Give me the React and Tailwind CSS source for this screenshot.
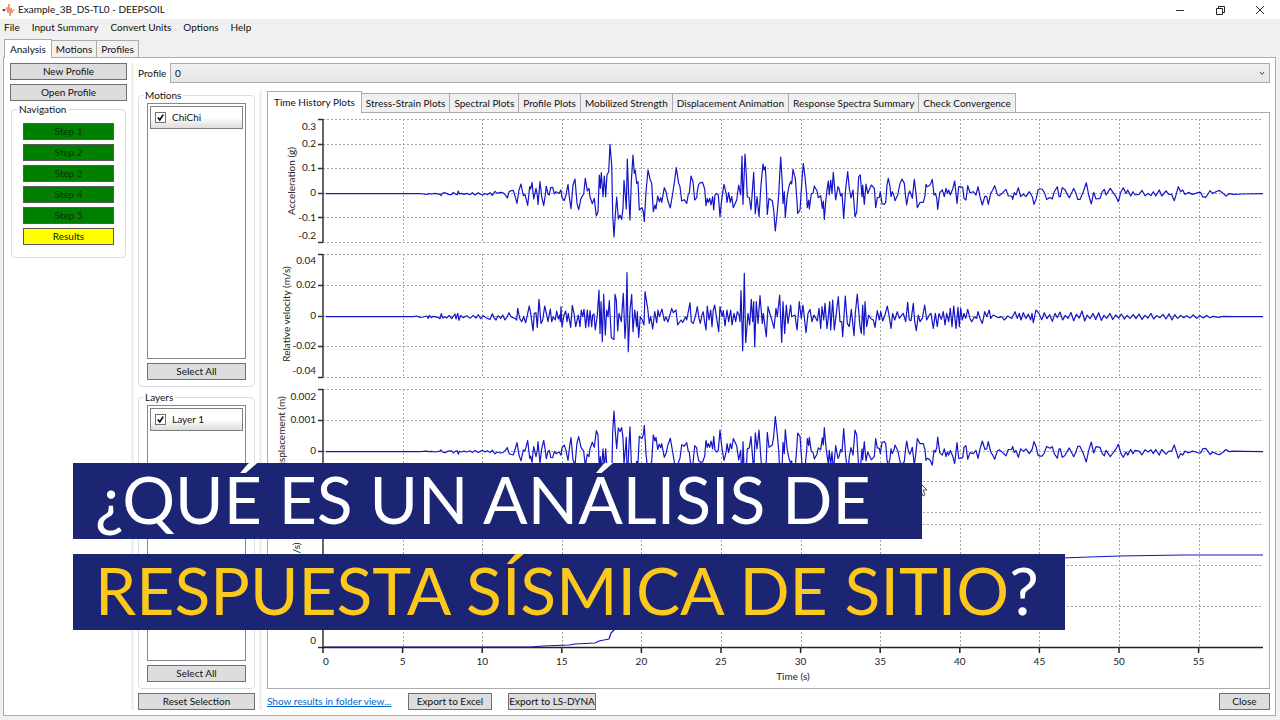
import React from "react";

// Each run of samples has its own x offset and zero level, in thirds of a chart unit.
const trace = (runs) =>
  runs.flatMap(({ start, zero, samples }) =>
    samples
      .trim()
      .split(/\s+/)
      .map((pair) => {
        const [x, y] = pair.split(",").map(Number);
        return [(x + start) / 3, (y - zero) / 3];
      })
  );

const ACCELERATION = trace([
  {
    start: -189,
    zero: 401,
    samples: `197,401 480,401 490,402 500,403 505,401 515,402 525,400 540,403 543,407 547,400 555,398 565,403 575,404 580,397 585,402 592,404 595,393 598,402 605,400 612,403 620,400 630,404 637,398 645,405 655,398 660,402 668,405 675,400 682,404 690,398 697,406 705,394 712,400 720,397 728,398 735,403 742,414 748,394`,
  },
  {
    start: 231,
    zero: 236,
    samples: `334,227 340,226 345,243 351,265 357,225 363,207 370,242 375,238 383,271 389,215 392,222 396,202 401,252 408,220 412,240 414,268 420,200 425,245 431,272 436,240 439,214 444,237 448,240 452,218 458,217 463,237 468,230 477,235 483,225 486,248 493,257 498,240 504,208 509,255 513,281 519,210 525,192 531,265 536,284 543,250 551,237 556,190 562,228 567,220 570,245 577,266 583,250 589,303 594,290 598,180 601,220 604,173 609,245 613,183 617,245 621,180 626,170 630,88 635,150 638,300 642,366 646,300 650,246 655,312 660,300 665,313 669,280 672,196 676,240 679,282 682,132 686,240 690,315 694,200 699,120 703,175 706,165 710,205 714,200 718,285 726,278 730,290 733,320 738,230 744,165 750,192 755,205 760,290 765,270 768,282 773,243 778,260 782,248 785,262 793,218 798,230 803,255 811,279 818,235 824,195 829,158 836,205 840,215 845,258 853,254 860,265 865,238 868,235 873,183 879,200 884,255 890,248`,
  },
  {
    start: 1071,
    zero: 236,
    samples: `52,230 56,208 62,202 68,203 74,222 78,272 82,250 85,262 89,250 93,270 98,245 101,285 105,240 110,235 115,240 120,305 124,265 127,240 132,208 139,238 141,262 146,233 151,262 155,245 160,278 170,255 176,210 182,240 186,123 189,268 195,117 199,180 202,245 208,248 213,284 221,172 226,296 231,245 237,305 243,210 249,147 252,165 256,155 259,210 262,298 267,250 277,257 281,285 286,348 292,290 296,240 299,180 302,126 307,205 309,266 313,230 316,307 322,240 328,210 332,200 335,207 339,163 346,190 350,245 353,295 360,285 366,195 370,146 375,185 380,240 382,278 386,255 388,282 394,236 399,235 403,213 411,228 415,248 422,242 427,280 430,258 433,313 437,260 441,225 445,198 448,240 452,195 456,235 460,172 467,255 474,215 477,220 482,243 486,235 491,310 497,220 503,170 508,220 513,249 519,225 525,305 530,290 536,185 541,180 546,245 548,210 553,268 558,207 563,235 574,210 583,220 587,278 592,248 598,247 601,230 606,266 613,268 617,262 621,210 625,190 630,215 633,245 637,230 642,242 645,257 653,240 660,205 666,192 673,205 677,248 680,270 685,240 689,228 694,240 697,250 703,193 708,235 712,278 720,262 730,262 735,242 738,208 742,215 746,213 751,208 757,193 762,240 766,235 770,248 773,283 779,233 787,225 793,245 798,220 802,235 806,225 811,240 818,222 824,198 831,265 836,215`,
  },
  {
    start: 1911,
    zero: 581,
    samples: `0,560 8,562 12,595 18,600 23,557 30,578 40,575 48,585 54,560 60,590 67,615 75,588 80,590 85,613 92,580 98,570 104,557 112,583 118,587 128,578 138,568 145,588 155,588 158,598 163,578 168,585 175,563 182,590 190,582 198,590 208,575 217,590 222,613 229,595 234,570 240,567 246,567 253,577 260,598 270,592 277,597 283,575 292,560 297,590 301,590 307,563 314,568 322,583 328,593 341,565 348,580 353,598 360,598 370,575 379,548 386,585 394,612 401,577 408,597 420,595 427,575 433,568 438,585 451,565 459,577 468,590 475,605 483,575 490,563 498,580 503,570 512,588 519,575 525,585 537,583 546,571 555,587 565,580 573,587 580,575 587,588 598,570 605,588 618,573 627,583 635,583 643,602 650,578 655,560 662,575 668,570 675,583 685,577 697,583 707,580 716,577 722,577 728,590 737,592 744,582 750,572 758,580 768,575 778,571 790,580 798,588 808,581 820,583 850,582 909,581`,
  },
]);

const VELOCITY = trace([
  {
    start: -189,
    zero: 200,
    samples: `197,200 460,200 470,198 480,202 490,201 500,198 505,205 508,196 514,203 518,199 535,202 540,206 544,191 548,204 555,200 560,204 568,196 575,206 585,192 588,207 593,190 597,211 602,196 610,203 620,197 630,205 640,196 648,204 655,194 662,206 670,197 678,203 690,208 697,191 703,204 708,210 714,197 722,205 728,195 735,210 740,202 747,188 753,200 765,205 770,210 773,175 779,205 785,215 791,200 797,218 803,190 808,168 812,190 819,242 823,190 828,188 832,232 837,148 843,220 848,210 854,168 860,195 864,215 871,177 875,215 880,200 886,210 890,183 895,207 899,195 901,215 903,170 906,230 912,195 917,183 921,215 925,190 932,232 937,166 942,190 947,230 955,195 960,230 964,180 968,200 972,178 977,233 982,180 986,230 990,182 995,230 998,195 1002,192 1006,240 1012,195 1017,120 1020,250 1023,155 1027,275 1031,133 1036,255 1040,180 1044,200 1048,152 1054,262 1062,268 1065,133 1069,150 1073,243 1077,190 1084,215 1090,130 1095,265 1098,215 1101,68 1105,305 1110,180 1115,133 1119,245 1124,180 1130,230 1132,185 1136,262 1141,200 1147,210 1152,225 1155,125 1163,175 1168,220 1172,200 1178,237 1184,185 1190,218 1194,180 1198,200`,
  },
  {
    start: 951,
    zero: 200,
    samples: `66,177 73,213 78,200 84,216 95,175 100,188 108,180 113,225 123,210 128,217 137,200 140,210 145,185 150,158 154,215 160,220 167,195 172,170 177,205 181,220 186,195 190,185 193,210 198,240 202,168 207,210 212,180 216,230 220,180 224,165 230,205 236,245 240,170 246,200 250,182 255,228 261,180 266,215 272,180 276,225 282,190 287,215 292,185 297,195 300,215 303,122 308,302 313,70 317,278 324,190 329,225 334,148 338,215 341,155 344,290 349,155 354,220 360,137 367,220 370,190 379,260 384,170 391,195 397,215 402,235 408,175 412,200 419,135 425,277 429,155 434,250 439,165 444,220 452,165 455,200 465,195 471,240 478,155 484,205 489,165 498,248 504,190 510,178 516,215 522,195 532,213 537,175 542,235 546,170 551,210 555,160 561,235 564,210 569,155 572,240 578,150 583,240 587,205 595,140 600,215 605,215 608,260 616,138 622,220 628,230 634,178 642,257 646,190 652,132 660,230 664,250 668,165 672,255 675,155 680,230 686,195 692,205 700,210 705,232 712,182 718,210 722,185 728,213 735,195 742,168 747,195 753,235 758,190 764,210 772,185 778,205 790,190 797,215 803,157 808,210 813,212 820,160 824,215 829,242 835,195 840,215 847,205 854,165 860,210 868,195 873,190 880,235 886,190 892,230 897,190 904,208 910,185 915,225 920,190 926,215 931,175 936,230 941,168 948,235 954,172 958,230 962,175 967,210 972,190 977,205 983,178 990,205 995,215 1003,200 1010,205 1014,185 1020,205 1027,220 1034,185 1040,200 1048,180 1052,205 1060,195 1075,203 1085,200 1093,210 1103,198 1115,205 1125,185 1132,205 1138,190 1143,210 1150,188 1158,205 1165,192 1172,210 1176,190 1180,218 1188,180 1197,190 1205,209 1213,188 1221,206 1229,194 1237,214 1245,190 1252,203 1260,186 1268,210 1276,196 1284,205 1293,187 1301,212 1309,193 1318,204 1326,183 1334,213 1342,195 1350,206 1359,190 1367,208 1376,188 1384,211 1392,196 1400,205 1410,190 1418,208 1427,195 1436,204 1444,192 1453,207 1462,196 1470,205 1480,194 1488,206 1497,192 1506,208 1515,196 1524,204 1533,190 1541,207 1550,197 1560,203 1569,193 1578,207 1587,191 1596,210 1604,194 1613,205 1622,196 1631,203 1640,197 1650,204 1660,195 1670,205 1680,197 1690,204 1700,196 1710,203 1720,199 1735,202 1750,199 1780,200 1869,200`,
  },
]);

const DISPLACEMENT = ACCELERATION.map(([x, y]) => [x, y * -0.94]);

const INTENSITY = [
  [0, 0], [208, 0], [220, -1], [246, -2], [252, -3], [272, -4], [276, -6], [286, -8],
  [288, -14], [292, -18], [302, -26], [320, -34], [400, -44], [428, -60], [460, -68],
  [520, -76], [640, -85], [738, -89], [796, -91], [860, -92], [940, -92],
];

const LEFT = 55;
const RIGHT = 995;
const STEP = 79.6;

const PLOTS = [
  {
    title: "Acceleration (g)", titleX: 27, titleY: 68, top: 6, rows: 5, pitch: 24.6, zero: 80.7, data: ACCELERATION,
    labels: [["0.3", 14], ["0.2", 31], ["0.1", 55], ["0", 80], ["-0.1", 105], ["-0.2", 123]],
  },
  {
    title: "Relative velocity (m/s)", titleX: 22, titleY: 201, top: 141, rows: 4, pitch: 30.75, zero: 203.7, data: VELOCITY,
    labels: [["0.04", 148], ["0.02", 172], ["0", 203], ["-0.02", 233], ["-0.04", 258]],
  },
  {
    title: "Relative displacement (m)", titleX: 17, titleY: 339, top: 276, rows: 4, pitch: 30.75, zero: 338.7, data: DISPLACEMENT,
    labels: [["0.002", 284], ["0.001", 307], ["0", 338]],
  },
  {
    title: "Arias Intensity (m/s)", titleX: 32, titleY: 473, top: 411, rows: 3, pitch: 41, zero: 534, data: INTENSITY,
    labels: [["0", 528]],
  },
];

function Plot({ plot }) {
  const { title, titleX, titleY, top, rows, pitch, zero, data, labels } = plot;
  const bottom = top + rows * pitch;
  const lines = Array.from({ length: rows + 1 }, (_, i) => Math.round(top + i * pitch) + 0.5);
  return (
    <g>
      <g stroke="#a3a3a3" strokeDasharray="2 2">
        {lines.map((y) => (
          <line key={y} x1={LEFT} x2={RIGHT} y1={y} y2={y} />
        ))}
        {Array.from({ length: 11 }, (_, i) => Math.round(LEFT + (i + 1) * STEP) + 0.5).map((x) => (
          <line key={x} x1={x} x2={x} y1={top} y2={bottom} />
        ))}
      </g>
      <g stroke="#333" strokeWidth="1.5">
        <line x1={LEFT} x2={LEFT} y1={top} y2={bottom} />
        {lines.map((y) => (
          <line key={y} x1={LEFT - 5} x2={LEFT} y1={y} y2={y} />
        ))}
      </g>
      <polyline
        points={data.map(([x, y]) => `${(LEFT + x).toFixed(1)},${(zero + y).toFixed(1)}`).join(" ")}
        fill="none"
        stroke="#1414c8"
        strokeWidth="1.2"
        strokeLinejoin="round"
      />
      {labels.map(([text, y]) => (
        <text key={text} x={LEFT - 7} y={y + 3} textAnchor="end">
          {text}
        </text>
      ))}
      <text transform={`translate(${titleX} ${titleY}) rotate(-90)`} textAnchor="middle">
        {title}
      </text>
    </g>
  );
}

function TimeHistoryChart() {
  return (
    <svg viewBox="0 0 1001 575" className="block w-full text-[10px]" fill="#222" role="img" aria-label="Time history plots">
      {PLOTS.map((plot) => (
        <Plot key={plot.title} plot={plot} />
      ))}
      <line x1={LEFT} x2={RIGHT} y1="534.5" y2="534.5" stroke="#222" strokeWidth="1.5" />
      {Array.from({ length: 12 }, (_, i) => (
        <g key={i}>
          <line x1={LEFT + i * STEP} x2={LEFT + i * STEP} y1="534" y2="540" stroke="#222" strokeWidth="1.5" />
          <text x={LEFT + i * STEP + (i ? 0 : 3)} y="552" textAnchor="middle">
            {i * 5}
          </text>
        </g>
      ))}
      <text x="525" y="567" textAnchor="middle">
        Time (s)
      </text>
    </svg>
  );
}

function Button({ children, className = "" }) {
  return (
    <button type="button" className={`h-[17px] shrink-0 border border-[#707070] bg-[#dddddd] leading-[15px] whitespace-nowrap ${className}`}>
      {children}
    </button>
  );
}

function ListGroup({ title, item }) {
  return (
    <fieldset className="flex min-w-0 flex-1 flex-col rounded-sm border border-[#d5dfe5] px-2 pb-1.5">
      <legend className="-ml-1 px-0.5 leading-4">{title}</legend>
      <div className="flex-1 border border-[#828790] p-0.5">
        <label className="flex h-[23px] items-center gap-1.5 border border-[#808080] bg-linear-to-b from-white from-50% to-[#dcdcdc] px-1">
          <input
            type="checkbox"
            defaultChecked
            className="peer sr-only"
          />
          <span className="flex size-[11px] items-center justify-center border border-[#707070] bg-white text-transparent peer-checked:text-black">
            <svg viewBox="0 0 10 10" className="size-[9px]" fill="none" stroke="currentColor" strokeWidth="1.8">
              <path d="M2 5 4.2 7.6 8 1.8" />
            </svg>
          </span>
          {item}
        </label>
      </div>
      <Button className="mt-1">Select All</Button>
    </fieldset>
  );
}

const PLOT_TABS = [
  "Time History Plots", "Stress-Strain Plots", "Spectral Plots", "Profile Plots",
  "Mobilized Strength", "Displacement Animation", "Response Spectra Summary", "Check Convergence",
];

export default function App() {
  return (
    <div className="relative flex min-h-screen flex-col bg-[#f0f0f0] font-['Lato','Noto_Sans',sans-serif] text-[10px] text-[#111]">
      <header className="flex h-[19px] items-center bg-white pl-0.5">
        <svg viewBox="0 0 14 14" className="size-3.5" fill="none">
          <path d="M3 7h1l1-3 1 6 1-9 1 12 1-8 1 5 1-3h2" stroke="#e8875c" strokeWidth="1" />
          <circle cx="1.8" cy="7" r="1.3" fill="#554a4a" />
        </svg>
        <h1 className="flex-1 pl-0.5">Example_3B_DS-TL0 - DEEPSOIL</h1>
        <div className="flex">
          <button type="button" aria-label="Minimize" className="flex h-[19px] w-10 items-center justify-center">
            <svg viewBox="0 0 10 10" className="size-2.5" stroke="#333"><path d="M1 5.5h8" /></svg>
          </button>
          <button type="button" aria-label="Restore" className="flex h-[19px] w-10 items-center justify-center">
            <svg viewBox="0 0 10 10" className="size-2.5" fill="none" stroke="#222">
              <path d="M1.500 3.500h6v6h-6zM3.500 3.500v-2h6v6h-2" />
            </svg>
          </button>
          <button type="button" aria-label="Close window" className="flex h-[19px] w-10 items-center justify-center">
            <svg viewBox="0 0 10 10" className="size-2.5" stroke="#222"><path d="M1 1l8 8M9 1L1 9" /></svg>
          </button>
        </div>
      </header>

      <nav className="flex h-[19px] items-center gap-3 pb-0.5 pl-1">
        {["File", "Input Summary", "Convert Units", "Options", "Help"].map((name) => (
          <button key={name} type="button">{name}</button>
        ))}
      </nav>

      <div className="flex h-[19px] items-end pl-1" role="tablist">
        <button type="button" role="tab" aria-selected="true" className="relative z-10 -mb-px h-[19px] border border-b-0 border-[#acacac] bg-white px-[5px]">Analysis</button>
        <button type="button" role="tab" aria-selected="false" className="h-[17px] border border-b-0 border-l-0 border-[#acacac] px-1">Motions</button>
        <button type="button" role="tab" aria-selected="false" className="h-[17px] border border-b-0 border-l-0 border-[#acacac] px-1">Profiles</button>
      </div>

      <main className="mr-1 mb-1 ml-[3px] flex flex-1 border border-[#acacac] bg-white p-[5px] pl-1.5">
        <aside className="flex w-[117px] shrink-0 flex-col">
          <Button>New Profile</Button>
          <Button className="mt-1">Open Profile</Button>
          <fieldset className="mx-px flex flex-col gap-1 rounded-sm border border-[#d5dfe5] px-[11px] pt-1.5 pb-3">
            <legend className="-ml-1.5 px-0.5 leading-4">Navigation</legend>
            {[1, 2, 3, 4, 5].map((n) => (
              <button key={n} type="button" className="h-[17px] border border-[#5a5a5a] bg-[#008000] leading-[15px] text-[#0a300a]">
                Step {n}
              </button>
            ))}
            <button type="button" className="h-[17px] border border-[#5a5a5a] bg-[#ffff00] leading-[15px]">Results</button>
          </fieldset>
        </aside>

        <div className="mr-1 ml-1 w-[3px] shrink-0 bg-[#f0f0f0]" />

        <div className="flex min-w-0 flex-1 flex-col">
          <div className="flex h-5 items-center">
            <label htmlFor="profile" className="w-8">Profile</label>
            <div className="relative flex-1">
              <select id="profile" className="block h-5 w-full appearance-none border border-[#acacac] bg-linear-to-b from-[#f0f0f0] to-[#e5e5e5] pl-1">
                <option>0</option>
              </select>
              <svg viewBox="0 0 8 8" className="pointer-events-none absolute top-1.5 right-1 size-2" fill="none" stroke="#444">
                <path d="M2 3l2 2.500 2-2.500" />
              </svg>
            </div>
          </div>

          <div className="flex flex-1">
            <section className="flex w-[117px] shrink-0 flex-col pt-1">
              <ListGroup title="Motions" item="ChiChi" />
              <div className="h-0.5" />
              <ListGroup title="Layers" item="Layer 1" />
              <Button className="mt-1">Reset Selection</Button>
            </section>

            <div className="mt-2 mr-[5px] ml-1 w-[3px] shrink-0 bg-[#f0f0f0]" />

            <section className="flex min-w-0 flex-1 flex-col pt-2">
              <div className="flex h-[21px] items-end" role="tablist">
                {PLOT_TABS.map((name, i) => (
                  <button
                    key={name}
                    type="button"
                    role="tab"
                    aria-selected={i === 0}
                    className={
                      i === 0
                        ? "relative z-10 -mb-px h-[22px] border border-b-0 border-[#acacac] bg-white px-1.5 whitespace-nowrap"
                        : "h-[19px] border border-b-0 border-l-0 border-[#acacac] bg-[#f0f0f0] px-1 whitespace-nowrap"
                    }
                  >
                    {name}
                  </button>
                ))}
              </div>
              <div className="flex-1 border border-[#acacac]">
                <TimeHistoryChart />
              </div>
              <div className="mt-1 flex items-center">
                <a href="#results" className="w-[125px] whitespace-nowrap text-[#0066cc] underline">Show results in folder view...</a>
                <Button className="ml-4 w-[84px]">Export to Excel</Button>
                <Button className="ml-4 w-[88px]">Export to LS-DYNA</Button>
                <Button className="ml-auto w-[51px]">Close</Button>
              </div>
            </section>
          </div>
        </div>
      </main>

      <svg viewBox="0 0 12 18" className="absolute top-[480px] left-[917px] z-10 h-[18px] w-3" fill="#fff" stroke="#555">
        <path d="M1 1v13l3-3 2 5 2-1-2-5h4z" />
      </svg>
      <div className="absolute top-[463px] left-[73px] z-20 flex flex-col items-start gap-[15px] font-['Lato',sans-serif] text-[66px] leading-[72px] whitespace-nowrap text-white">
        <p className="w-[849px] bg-[#1c2474] pb-1 pl-[22px]">¿QUÉ ES UN ANÁLISIS DE</p>
        <p className="w-[992px] bg-[#1c2474] pb-1 pl-[22px]">
          <span className="text-[#fcc81c]">RESPUESTA SÍSMICA DE SITIO</span>?
        </p>
      </div>
    </div>
  );
}
